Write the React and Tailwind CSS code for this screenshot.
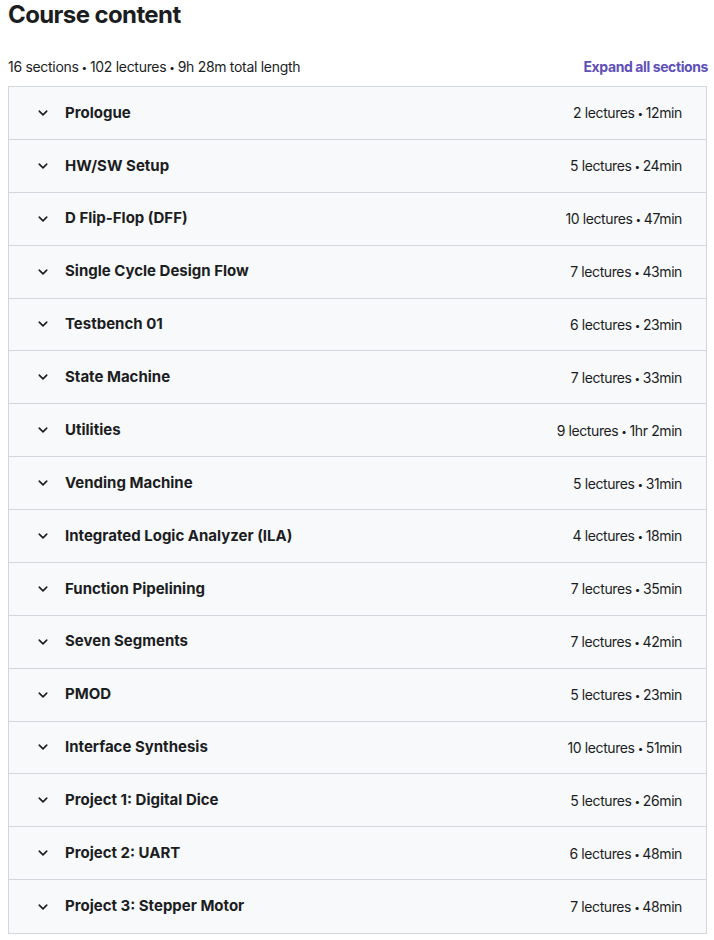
import { ChevronDown } from 'lucide-react';

const SECTIONS = [
  ['Prologue', '2 lectures • 12min'],
  ['HW/SW Setup', '5 lectures • 24min'],
  ['D Flip-Flop (DFF)', '10 lectures • 47min'],
  ['Single Cycle Design Flow', '7 lectures • 43min'],
  ['Testbench 01', '6 lectures • 23min'],
  ['State Machine', '7 lectures • 33min'],
  ['Utilities', '9 lectures • 1hr 2min'],
  ['Vending Machine', '5 lectures • 31min'],
  ['Integrated Logic Analyzer (ILA)', '4 lectures • 18min'],
  ['Function Pipelining', '7 lectures • 35min'],
  ['Seven Segments', '7 lectures • 42min'],
  ['PMOD', '5 lectures • 23min'],
  ['Interface Synthesis', '10 lectures • 51min'],
  ['Project 1: Digital Dice', '5 lectures • 26min'],
  ['Project 2: UART', '6 lectures • 48min'],
  ['Project 3: Stepper Motor', '7 lectures • 48min'],
];

// small dot separator like the original
function Dotted({ text }) {
  const parts = text.split(' • ');
  return parts.map((p, i) => (
    <span key={i}>
      {i > 0 && <span className="text-[10px] mx-[3px] align-[1px]">•</span>}
      {p}
    </span>
  ));
}

export default function App() {
  return (
    <div className="min-h-screen bg-white text-[#1c1d1f] px-2" style={{ fontFamily: 'Inter, "Noto Sans", sans-serif' }}>
      <h2 className="text-[24px] leading-[30px] font-bold tracking-[-0.6px]">Course content</h2>

      <div className="mt-[26px] mb-[10px] h-[20px] flex items-center justify-between">
        <span className="text-[14px] tracking-[-0.3px]"><Dotted text="16 sections • 102 lectures • 9h 28m total length" /></span>
        <button className="text-[14px] font-bold text-[#6050b8] tracking-[-0.4px] -mr-[2px]">Expand all sections</button>
      </div>

      {/* Sections */}
      <div className="w-[699px] border border-[#d1d7dc] bg-[#f7f9fa]">
        {SECTIONS.map(([title, meta], i) => (
          <div key={title}
            className={`h-[52.875px] flex items-center justify-between pl-6 pr-6 ${i < SECTIONS.length - 1 ? 'border-b border-[#d1d7dc]' : ''}`}>
            <div className="flex items-center gap-3">
              <ChevronDown size={20} strokeWidth={2.5} className="scale-75" />
              <span className="text-[15px] font-bold">{title}</span>
            </div>
            <span className="text-[14px] tracking-[-0.4px]"><Dotted text={meta} /></span>
          </div>
        ))}
      </div>
    </div>
  );
}
